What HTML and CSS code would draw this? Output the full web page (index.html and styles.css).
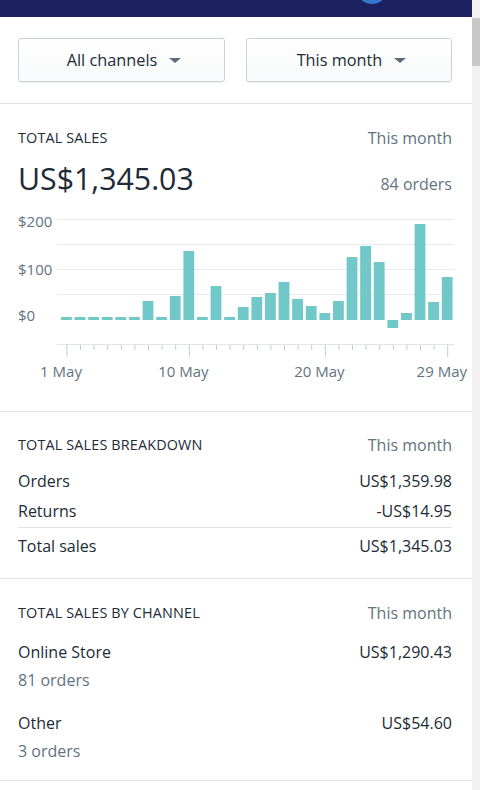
FILE: index.html
```html
<!DOCTYPE html>
<html>
<head>
<meta charset="utf-8">
<title>Sales</title>
<link rel="stylesheet" href="styles.css">
</head>
<body>
<div class="window">
  <main class="page">
    <header class="topbar"><span class="avatar"></span></header>

    <div class="filters">
      <button class="select"><span>All channels</span><span class="caret"></span></button>
      <button class="select"><span>This month</span><span class="caret"></span></button>
    </div>

    <section class="card card-sales">
      <div class="card-head"><h2>TOTAL SALES</h2><span class="muted">This month</span></div>
      <div class="total-row"><span class="big">US$1,345.03</span><span class="muted">84 orders</span></div>
      <svg class="chart" viewBox="0 0 472 206" width="472" height="206">
        <g class="grid">
          <line x1="57" y1="14.5" x2="454" y2="14.5"/>
          <line x1="57" y1="39.5" x2="454" y2="39.5"/>
          <line x1="57" y1="64.5" x2="454" y2="64.5"/>
          <line x1="57" y1="89.5" x2="454" y2="89.5"/>
        </g>
        <g class="ylabels">
          <text x="18" y="22">$200</text>
          <text x="18" y="70">$100</text>
          <text x="18" y="116">$0</text>
        </g>
        <g class="bars">
          <rect x="61.0" y="112" width="10.8" height="3"/>
          <rect x="74.6" y="112" width="10.8" height="3"/>
          <rect x="88.2" y="112" width="10.8" height="3"/>
          <rect x="101.8" y="112" width="10.8" height="3"/>
          <rect x="115.4" y="112" width="10.8" height="3"/>
          <rect x="129.0" y="112" width="10.8" height="3"/>
          <rect x="142.6" y="96" width="10.8" height="19"/>
          <rect x="156.2" y="112" width="10.8" height="3"/>
          <rect x="169.8" y="91" width="10.8" height="24"/>
          <rect x="183.4" y="46" width="10.8" height="69"/>
          <rect x="197.0" y="112" width="10.8" height="3"/>
          <rect x="210.6" y="81" width="10.8" height="34"/>
          <rect x="224.2" y="112" width="10.8" height="3"/>
          <rect x="237.8" y="102" width="10.8" height="13"/>
          <rect x="251.4" y="92" width="10.8" height="23"/>
          <rect x="265.0" y="88" width="10.8" height="27"/>
          <rect x="278.6" y="77" width="10.8" height="38"/>
          <rect x="292.2" y="94" width="10.8" height="21"/>
          <rect x="305.8" y="101" width="10.8" height="14"/>
          <rect x="319.4" y="108" width="10.8" height="7"/>
          <rect x="333.0" y="96" width="10.8" height="19"/>
          <rect x="346.6" y="52" width="10.8" height="63"/>
          <rect x="360.2" y="41" width="10.8" height="74"/>
          <rect x="373.8" y="57" width="10.8" height="58"/>
          <rect x="387.4" y="115" width="10.8" height="8"/>
          <rect x="401.0" y="108" width="10.8" height="7"/>
          <rect x="414.6" y="19" width="10.8" height="96"/>
          <rect x="428.2" y="97" width="10.8" height="18"/>
          <rect x="441.8" y="72" width="10.8" height="43"/>
        </g>
        <g class="axis">
          <line x1="57" y1="139.5" x2="454" y2="139.5"/>
          <path d="M66.9 140v12M80.5 140v5M94.1 140v5M107.7 140v5M121.3 140v5M134.9 140v5M148.5 140v5M162.1 140v5M175.7 140v5M189.3 140v12M202.9 140v5M216.5 140v5M230.1 140v5M243.7 140v5M257.3 140v5M270.9 140v5M284.5 140v5M298.1 140v5M311.7 140v5M325.3 140v12M338.9 140v5M352.5 140v5M366.1 140v5M379.7 140v5M393.3 140v5M406.9 140v5M420.5 140v5M434.1 140v5M447.7 140v12"/>
        </g>
        <g class="xlabels">
          <text x="61" y="171.5">1 May</text>
          <text x="183.4" y="171.5">10 May</text>
          <text x="319.4" y="171.5">20 May</text>
          <text x="441.8" y="171.5">29 May</text>
        </g>
      </svg>
    </section>

    <section class="card card-breakdown">
      <div class="card-head"><h2>TOTAL SALES BREAKDOWN</h2><span class="muted">This month</span></div>
      <div class="row row-first"><span>Orders</span><span>US$1,359.98</span></div>
      <div class="row row-next"><span>Returns</span><span>-US$14.95</span></div>
      <div class="divider"></div>
      <div class="row row-total"><span>Total sales</span><span>US$1,345.03</span></div>
    </section>

    <section class="card card-channel">
      <div class="card-head"><h2>TOTAL SALES BY CHANNEL</h2><span class="muted">This month</span></div>
      <div class="channel channel-first">
        <div class="row"><span>Online Store</span><span>US$1,290.43</span></div>
        <div class="sub muted">81 orders</div>
      </div>
      <div class="channel channel-next">
        <div class="row"><span>Other</span><span>US$54.60</span></div>
        <div class="sub muted">3 orders</div>
      </div>
    </section>

    <section class="card card-rest"></section>
  </main>
  <div class="scrollbar"><div class="thumb"></div></div>
</div>
</body>
</html>
```

FILE: styles.css
```css
* {
  box-sizing: border-box;
  margin: 0;
  padding: 0;
}

html, body {
  width: 480px;
  height: 790px;
  overflow: hidden;
  background: #ffffff;
}

body {
  font-family: "Open Sans", "Noto Sans", sans-serif;
  font-size: 16px;
  color: #212b36;
}

.window {
  display: flex;
  height: 790px;
}

.page {
  width: 472px;
  flex: none;
  overflow: hidden;
}

.scrollbar {
  width: 8px;
  flex: none;
  background: #f1f1f1;
  padding-top: 18px;
}

.thumb {
  height: 48px;
  background: #c8c8c8;
}

.topbar {
  height: 17px;
  background: #1c2260;
  display: flex;
  justify-content: flex-end;
  align-items: flex-start;
  padding-right: 84px;
  overflow: hidden;
}

.avatar {
  width: 32px;
  height: 32px;
  flex: none;
  border-radius: 50%;
  background: #3479cf;
  margin-top: -28px;
}

.filters {
  display: grid;
  grid-template-columns: 207px 206px;
  column-gap: 21px;
  padding: 21px 20px 21px 18px;
  border-bottom: 1px solid #e1e4e8;
}

.select {
  height: 44px;
  border: 1px solid #c9d0d7;
  border-radius: 3px;
  background: linear-gradient(#ffffff, #f9fafb);
  box-shadow: 0 1px 0 rgba(22, 29, 37, 0.05);
  display: flex;
  align-items: center;
  justify-content: center;
  padding-left: 5px;
  font-family: inherit;
  font-size: 16.3px;
  color: #212b36;
}

.caret {
  width: 0;
  height: 0;
  border-left: 6px solid transparent;
  border-right: 6px solid transparent;
  border-top: 5px solid #5f6b77;
  margin-left: 12px;
  margin-top: 1px;
}

.card {
  padding: 0 20px 0 18px;
  border-bottom: 1px solid #e1e4e8;
}

.card-head {
  height: 24px;
  display: flex;
  justify-content: space-between;
  align-items: center;
  line-height: 24px;
}

.card-head h2 {
  font-size: 14.4px;
  font-weight: 500;
  letter-spacing: 0.15px;
  color: #212b36;
}

.muted {
  color: #637381;
}

.card-sales {
  padding-top: 22px;
}

.total-row {
  margin-top: 11px;
  height: 36px;
  display: flex;
  justify-content: space-between;
  align-items: baseline;
  line-height: 36px;
}

.big {
  font-size: 30.3px;
  color: #212b36;
}

.chart {
  display: block;
  margin: 8px -20px 0 -18px;
  width: 472px;
  height: 206px;
}

.grid line {
  stroke: #e8eaed;
  stroke-width: 1;
}

.bars rect {
  fill: #70c8c9;
}

.axis line {
  stroke: #e1e4e8;
  stroke-width: 1;
}

.axis path {
  stroke: #c4cbd2;
  stroke-width: 1;
  fill: none;
}

.ylabels text,
.xlabels text {
  font-family: "Open Sans", "Noto Sans", sans-serif;
  font-size: 15px;
  fill: #637381;
}

.xlabels text {
  text-anchor: middle;
}

.row {
  display: flex;
  justify-content: space-between;
  height: 24px;
  line-height: 24px;
}

.card-breakdown {
  padding-top: 21px;
  padding-bottom: 20px;
}

.row-first {
  margin-top: 12px;
}

.row-next {
  margin-top: 6px;
}

.divider {
  margin-top: 4px;
  height: 1px;
  background: #dfe3e8;
}

.row-total {
  margin-top: 6px;
}

.card-channel {
  padding-top: 22px;
  padding-bottom: 17px;
}

.channel-first {
  margin-top: 15px;
}

.channel-next {
  margin-top: 19px;
}

.sub {
  margin-top: 4px;
  height: 24px;
  line-height: 24px;
}

.card-rest {
  height: 40px;
  border-bottom: none;
}
```
